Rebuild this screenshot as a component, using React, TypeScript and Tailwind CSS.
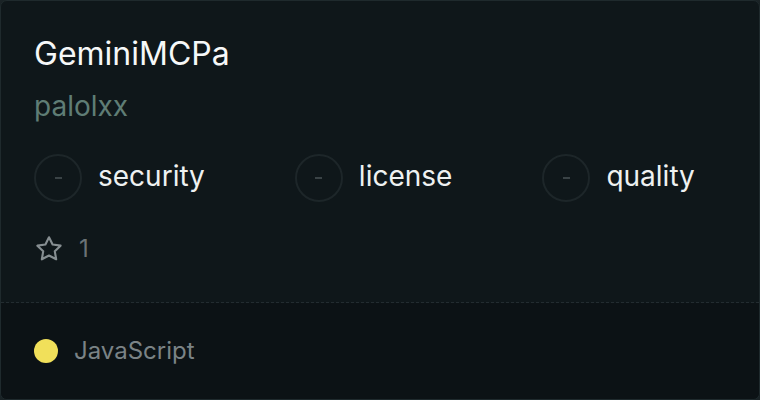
import React from "react";

const Badge = ({ label }: { label: string }) => (
  <div className="flex items-center gap-[16px]">
    <div className="w-12 h-12 rounded-full border-2 border-[#1d2629] flex items-center justify-center">
      <span className="w-[7px] h-[2px] bg-[#3a4346]" />
    </div>
    <span className="text-[28px] leading-9 pb-[4px] text-[#eef1f1]">{label}</span>
  </div>
);

const App: React.FC = () => {
  return (
    <div
      className="w-[760px] h-[400px] bg-[#1a2326]"
      style={{ fontFamily: "Inter, 'Noto Sans', sans-serif" }}
    >
      <div className="w-full h-full rounded-[7px] border border-[#1f2a2d] bg-[#0f171a] overflow-hidden flex flex-col">
        {/* Top */}
        <div className="px-[33px] pt-[33px] h-[302px] border-b border-dashed border-[#232c30]">
          <h1 className="text-[32px] leading-10 text-[#f6f8f8]">GeminiMCPa</h1>
          <div className="mt-[14px] text-[28px] leading-9 text-[#5f7d75]">palolxx</div>

          <div className="mt-[30px] flex gap-[90px]">
            <Badge label="security" />
            <Badge label="license" />
            <Badge label="quality" />
          </div>

          <div className="mt-[31px] flex items-center gap-[15px]">
            <svg width="30" height="30" viewBox="0 0 24 24" fill="none" stroke="#868e91" strokeWidth="1.7" strokeLinejoin="round">
              <path d="M12 2.6l2.87 5.8 6.4.94-4.63 4.51 1.09 6.37L12 17.2l-5.73 3.02 1.09-6.37-4.63-4.51 6.4-.94z" />
            </svg>
            <span className="text-[24px] leading-8 text-[#6a7376]">1</span>
          </div>
        </div>

        {/* Footer */}
        <div className="flex-1 bg-[#0c1215] px-[33px] flex items-center gap-[16px]">
          <span className="w-6 h-6 rounded-full bg-[#f1e05a]" />
          <span className="text-[24px] leading-8 text-[#7b8386]">JavaScript</span>
        </div>
      </div>
    </div>
  );
};

export default App;
